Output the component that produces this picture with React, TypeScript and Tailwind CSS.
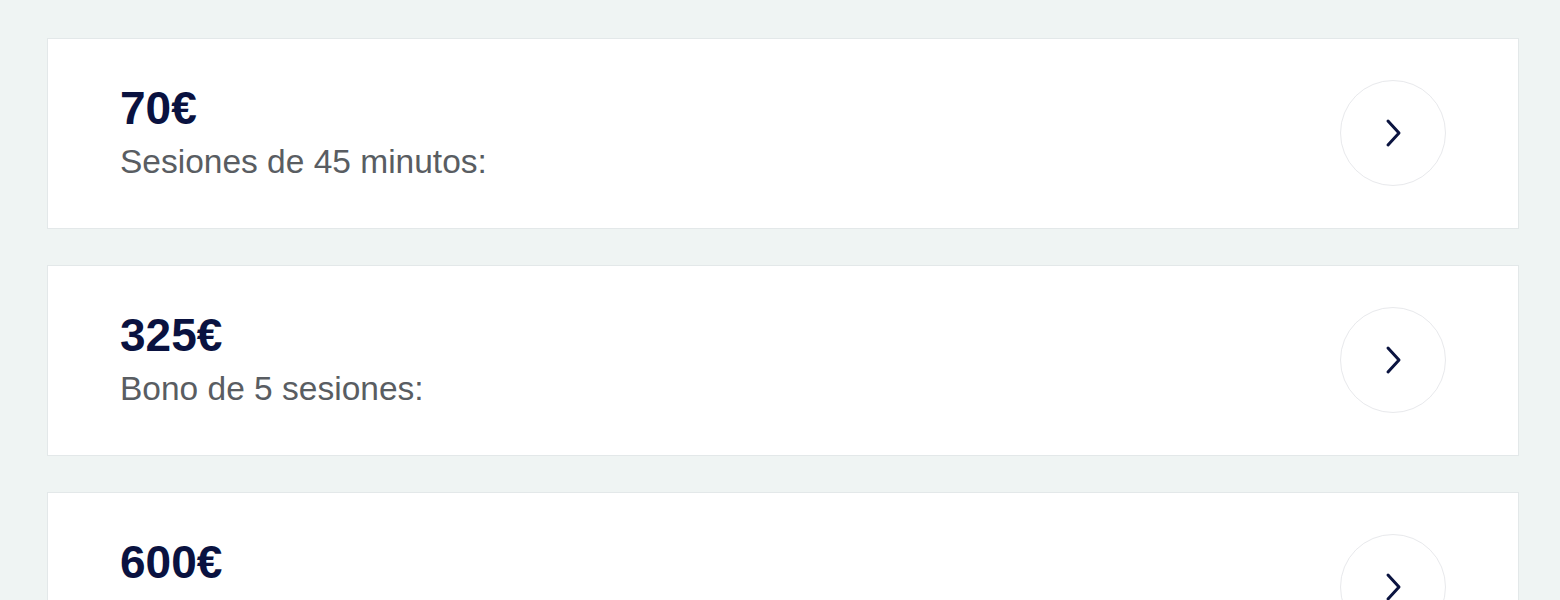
const plans = [
  { price: "70€", label: "Sesiones de 45 minutos:" },
  { price: "325€", label: "Bono de 5 sesiones:" },
  { price: "600€", label: "Bono de 10 sesiones:" },
];

function Chevron() {
  return (
    <svg width="18" height="30" viewBox="0 0 18 30" fill="none">
      <path d="M4 3 L15 15 L4 27" stroke="#0b1440" strokeWidth="3" strokeLinecap="round" strokeLinejoin="round" />
    </svg>
  );
}

export default function App() {
  return (
    <div
      className="min-h-[600px] bg-[#eff4f3] pt-[38px] pl-[47px] pr-[41px] flex flex-col gap-[36px]"
      style={{ fontFamily: '"Liberation Sans", Arial, sans-serif' }}
    >
      {plans.map((p) => (
        <div
          key={p.price}
          className="h-[191px] shrink-0 bg-white border border-[#e3e8e9] flex items-start justify-between pl-[72px] pr-[72px]"
        >
          <div className="flex flex-col pt-[43px]">
            <span className="text-[46px] leading-[52px] font-bold text-[#0a1240]">{p.price}</span>
            <span className="mt-[8px] text-[33.5px] leading-[40px] text-[#595d62]">{p.label}</span>
          </div>
          <button className="mt-[41px] w-[106px] h-[106px] rounded-full border border-[#e8e9ec] flex items-center justify-center bg-white">
            <Chevron />
          </button>
        </div>
      ))}
    </div>
  );
}
